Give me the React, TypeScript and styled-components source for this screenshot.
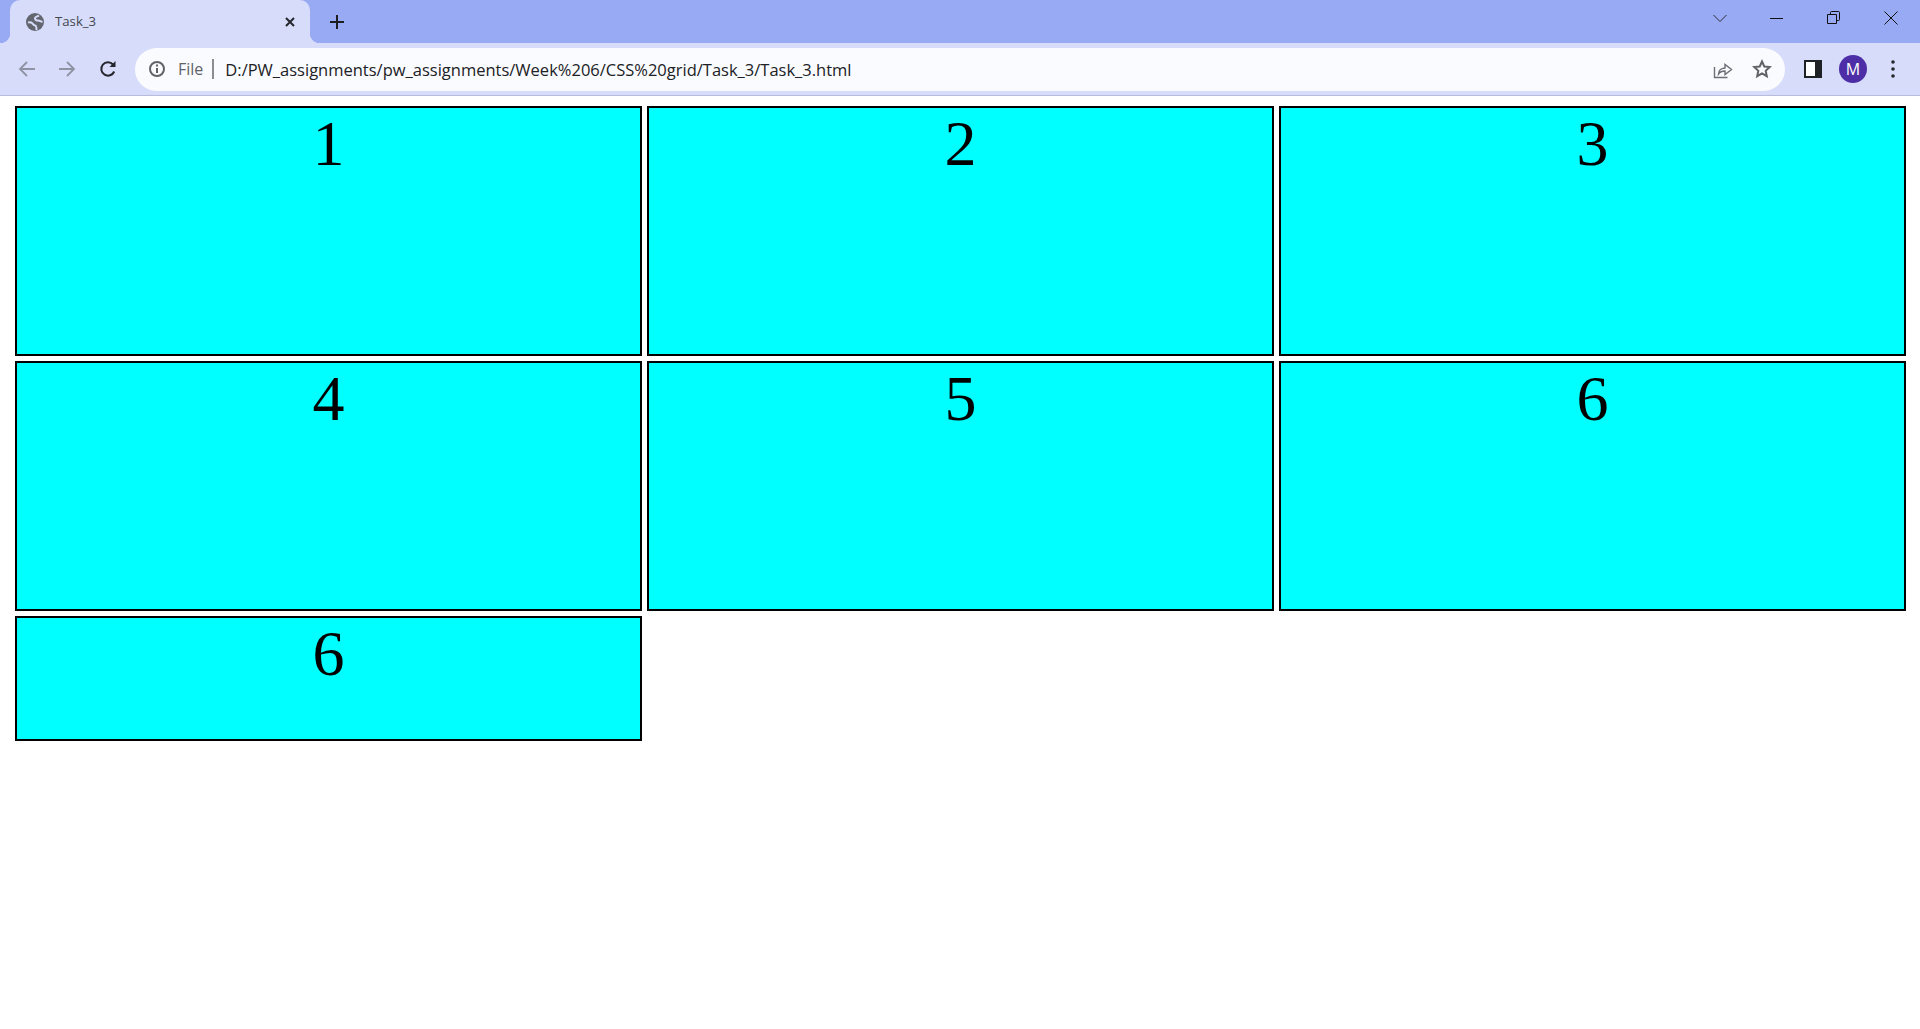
import React from 'react';
import styled, { createGlobalStyle } from 'styled-components';

const GlobalStyle = createGlobalStyle`
  html, body {
    margin: 0;
    padding: 0;
    background: #fff;
  }
`;

const TabStrip = styled.div`
  height: 43px;
  background: #99aaf5;
  display: flex;
  align-items: flex-end;
`;

const Tab = styled.div`
  position: relative;
  width: 300px;
  height: 43px;
  margin-left: 10px;
  padding: 0 14px 0 16px;
  box-sizing: border-box;
  background: #d6dcfa;
  border-radius: 10px 10px 0 0;
  display: flex;
  align-items: center;
  &::before,
  &::after {
    content: '';
    position: absolute;
    bottom: 0;
    width: 10px;
    height: 10px;
  }
  &::before {
    left: -10px;
    background: radial-gradient(circle at 0 0, transparent 10px, #d6dcfa 10.5px);
  }
  &::after {
    right: -10px;
    background: radial-gradient(circle at 100% 0, transparent 10px, #d6dcfa 10.5px);
  }
`;

const TabTitle = styled.span`
  flex: 1;
  margin-left: 11px;
  padding-bottom: 2px;
  font: 13.2px 'Open Sans', sans-serif;
  color: #45474f;
`;

const IconSlot = styled.div<{ $w: number }>`
  width: ${(p) => p.$w}px;
  height: 100%;
  flex: none;
  display: flex;
  align-items: center;
  justify-content: center;
`;

const NewTab = styled(IconSlot)`
  margin-left: 7px;
  height: 43px;
`;

const Spacer = styled.div`
  flex: 1;
`;

const WindowControls = styled.div`
  display: flex;
  height: 36px;
  align-self: flex-start;
`;

const Toolbar = styled.div`
  height: 52px;
  padding: 0 7px;
  background: #d6dcfa;
  border-bottom: 1px solid #b7bbdc;
  display: flex;
  align-items: center;
`;

const Omnibox = styled.div`
  flex: 1;
  height: 43px;
  margin: 0 8px 0 7px;
  padding: 0 4px 0 13px;
  border-radius: 22px;
  background: #fafbff;
  display: flex;
  align-items: center;
`;

const Scheme = styled.span`
  margin-left: 12px;
  font: 16px 'Open Sans', sans-serif;
  color: #5f6368;
`;

const Divider = styled.span`
  width: 2px;
  height: 20px;
  margin: 0 11px 0 9px;
  background: #8a8d94;
`;

const Url = styled.span`
  flex: 1;
  font: 16.5px 'Open Sans', sans-serif;
  color: #202124;
`;

const Avatar = styled.div`
  width: 28px;
  height: 28px;
  border-radius: 50%;
  background: #4e2ea6;
  color: #fff;
  font: 16px 'Open Sans', sans-serif;
  display: flex;
  align-items: center;
  justify-content: center;
`;

const Grid = styled.main`
  display: grid;
  grid-template-columns: repeat(3, 1fr);
  grid-template-rows: 250px 250px 125px;
  gap: 5px;
  padding: 10px 14px 0 15px;
`;

const Cell = styled.div`
  box-sizing: border-box;
  border: 2px solid #000;
  background: #0ff;
  text-align: center;
  font: 64px/72px 'Liberation Serif', serif;
  color: #000;
`;

const Globe = () => (
  <svg width="18" height="18" viewBox="0 0 18 18">
    <circle cx="9" cy="9" r="9" fill="#63666e" />
    <path d="M2 9.500c2-.5 3-.5 4 .5s1.500 2.500 3 2.500 1.500 2 1.500 4.500" fill="none" stroke="#d6dcfa" strokeWidth="2" />
    <path d="M13 2.500c-1.500 1-3.500 1-4 2.500s1.500 2.500 3 2.500 3 1 4.500 1.500" fill="none" stroke="#d6dcfa" strokeWidth="2" />
  </svg>
);

const Stroke = ({
  size,
  color,
  width = 2,
  children,
}: {
  size: number;
  color: string;
  width?: number;
  children: React.ReactNode;
}) => (
  <svg width={size} height={size} viewBox={`0 0 ${size} ${size}`} fill="none" stroke={color} strokeWidth={width}>
    {children}
  </svg>
);

const cells = ['1', '2', '3', '4', '5', '6', '6'];

export default function App() {
  return (
    <>
      <GlobalStyle />
      <TabStrip>
        <Tab>
          <Globe />
          <TabTitle>Task_3</TabTitle>
          <Stroke size={12} color="#26272b">
            <path d="M2 2l8 8M10 2l-8 8" />
          </Stroke>
        </Tab>
        <NewTab $w={40}>
          <Stroke size={16} color="#1d1e22">
            <path d="M8 1v14M1 8h14" />
          </Stroke>
        </NewTab>
        <Spacer />
        <WindowControls>
          <IconSlot $w={40}>
            <Stroke size={14} color="#2a2c35" width={1}>
              <path d="M.5 4l6.500 6.500L13.500 4" />
            </Stroke>
          </IconSlot>
          <IconSlot $w={8} />
          <IconSlot $w={57}>
            <Stroke size={14} color="#111" width={1}>
              <path d="M0 7.500h13" />
            </Stroke>
          </IconSlot>
          <IconSlot $w={57}>
            <Stroke size={14} color="#111" width={1}>
              <path d="M.5 3.500h9v9h-9zM3.500 3.500v-2a1 1 0 0 1 1-1h7a1 1 0 0 1 1 1v7a1 1 0 0 1-1 1h-2" />
            </Stroke>
          </IconSlot>
          <IconSlot $w={58}>
            <Stroke size={14} color="#111" width={1}>
              <path d="M.5.500l13 13M13.500.500l-13 13" />
            </Stroke>
          </IconSlot>
        </WindowControls>
      </TabStrip>
      <Toolbar>
        <IconSlot $w={40}>
          <Stroke size={18} color="#8f93a3" width={1.8}>
            <path d="M17 9H2M9 2L2 9l7 7" />
          </Stroke>
        </IconSlot>
        <IconSlot $w={40}>
          <Stroke size={18} color="#8f93a3" width={1.8}>
            <path d="M1 9h15M9 2l7 7-7 7" />
          </Stroke>
        </IconSlot>
        <IconSlot $w={41}>
          <Stroke size={18} color="#26272b" width={2}>
            <path d="M15.200 11.500A6.700 6.700 0 1 1 14 4.500" />
            <path d="M16.500 1v6h-6" fill="#26272b" stroke="none" />
          </Stroke>
        </IconSlot>
        <Omnibox>
          <Stroke size={18} color="#5f6368" width={2}>
            <circle cx="9" cy="9" r="7" />
            <path d="M9 8v5M9 4.500v2" />
          </Stroke>
          <Scheme>File</Scheme>
          <Divider />
          <Url>D:/PW_assignments/pw_assignments/Week%206/CSS%20grid/Task_3/Task_3.html</Url>
          <IconSlot $w={39}>
            <Stroke size={20} color="#6b6e76" width={1.4}>
              <path d="M5.500 15c.2-3 1-5.500 6.500-6V5.500l6.500 5-6.500 5V12c-3 0-5 .8-6.500 3z" />
              <path d="M1.500 8v10.500h13" />
            </Stroke>
          </IconSlot>
          <IconSlot $w={39}>
            <Stroke size={20} color="#5f6368" width={2}>
              <path d="M10 2.500l2.300 5 5.400.6-4 3.700 1.100 5.400-4.800-2.700-4.800 2.700 1.100-5.400-4-3.700 5.400-.6z" />
            </Stroke>
          </IconSlot>
        </Omnibox>
        <IconSlot $w={40}>
          <svg width="18" height="18" viewBox="0 0 18 18">
            <path d="M0 0h18v18H0z" fill="#202124" />
            <path d="M2 2h9v14H2z" fill="#fff" />
          </svg>
        </IconSlot>
        <IconSlot $w={40}>
          <Avatar>M</Avatar>
        </IconSlot>
        <IconSlot $w={40}>
          <svg width="4" height="18" viewBox="0 0 4 18" fill="#26272b">
            <circle cx="2" cy="2" r="1.800" />
            <circle cx="2" cy="9" r="1.800" />
            <circle cx="2" cy="16" r="1.800" />
          </svg>
        </IconSlot>
      </Toolbar>
      <Grid>
        {cells.map((label, i) => (
          <Cell key={i}>{label}</Cell>
        ))}
      </Grid>
    </>
  );
}
